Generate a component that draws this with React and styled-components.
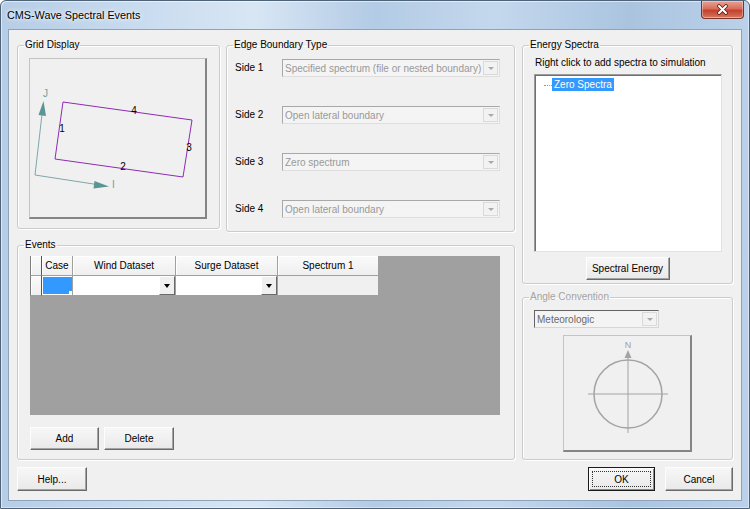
import React from 'react';
import styled, { createGlobalStyle } from 'styled-components';

const GlobalStyle = createGlobalStyle`
  html, body { margin:0; padding:0; width:750px; height:509px; overflow:hidden; background:#fff; }
  body { font-family:"Liberation Sans", Arial, sans-serif; font-size:10px; color:#000; }
  #root { width:750px; height:509px; }
`;

const Window = styled.div`
  width:750px;
  height:509px;
  box-sizing:border-box;
  border:1px solid #4e6378;
  border-radius:6px 6px 0 0;
  background:linear-gradient(90deg, #b6cde6 0%, #c8dbef 18%, #d8e6f4 34%, #b3cbe5 50%, #c4d8ed 66%, #aac4e0 84%, #bbd1e9 100%);
  box-shadow:inset 1px 1px 0 rgba(255,255,255,0.55), inset -1px -1px 0 rgba(255,255,255,0.4);
  display:flex;
  flex-direction:column;
`;

const TitleBar = styled.div`
  height:28px;
  flex:none;
  display:flex;
  align-items:flex-start;
  padding-left:6px;
`;

const Title = styled.div`
  margin-top:8px;
  font-size:10.8px;
  line-height:12px;
  text-shadow:0 0 6px rgba(255,255,255,0.95), 0 0 3px rgba(255,255,255,0.9);
`;

const CloseButton = styled.div`
  margin-left:auto;
  margin-right:5px;
  width:43px;
  height:18px;
  box-sizing:border-box;
  border:1px solid #7a3329;
  border-top:none;
  border-radius:0 0 4px 4px;
  background:linear-gradient(#eaa393 0%, #d76d5d 45%, #c4402c 55%, #cf6a52 90%, #dc8b76 100%);
  box-shadow:inset 0 0 0 1px rgba(255,255,255,0.35);
  display:flex;
  align-items:center;
  justify-content:center;
`;

const Client = styled.div`
  flex:1;
  margin:0 7px 7px;
  border:1px solid #8ea3ba;
  background:#f0f0f0;
  padding:9px 8px 0 8px;
  display:flex;
  flex-direction:column;
  gap:7px;
`;

const MainArea = styled.div`
  height:421px;
  display:flex;
  gap:7px;
`;

const Column = styled.div`
  width:${p => p.$w}px;
  display:flex;
  flex-direction:column;
  gap:7px;
`;

const TopRow = styled.div`
  display:flex;
  gap:6px;
  align-items:flex-start;
`;

const Group = styled.fieldset`
  margin:0;
  padding:0;
  min-width:0;
  box-sizing:border-box;
  width:${p => p.$w}px;
  height:${p => p.$h}px;
  border:1px solid #cbcbcb;
  border-radius:3px;
  box-shadow:inset 1px 1px 0 #fff, 1px 1px 0 #fff;
`;

const Legend = styled.legend`
  margin-left:6px;
  padding:0 1px;
  line-height:12px;
  color:${p => (p.$disabled ? '#a3a3a3' : '#000')};
`;

const DrawPanel = styled.div`
  box-sizing:border-box;
  width:${p => p.$w}px;
  height:${p => p.$h}px;
  margin:${p => p.$m};
  border-style:solid;
  border-width:1px 2px 2px 1px;
  border-color:#c4c4c4 #858585 #858585 #c4c4c4;
  background:#f0f0f0;
  svg { display:block; width:100%; height:100%; }
`;

const SideGrid = styled.div`
  display:grid;
  grid-template-columns:47px 218px;
  grid-auto-rows:18px;
  row-gap:29px;
  align-items:center;
  padding:8px 0 0 8px;
`;

const SideLabel = styled.div`
  line-height:12px;
`;

const Combo = styled.div`
  box-sizing:border-box;
  width:${p => p.$w || 218}px;
  height:18px;
  margin:${p => p.$m || '0'};
  display:flex;
  align-items:center;
  border:1px solid;
  border-color:${p => (p.$dark ? '#646464 #d6d6d6 #d6d6d6 #646464' : '#a8a8a8 #dedede #dedede #a8a8a8')};
  background:#f4f4f4;
  color:${p => (p.$dark ? '#6a6a6a' : '#999')};
  padding:0 1px 0 2px;
  white-space:nowrap;
`;

const ComboText = styled.span`
  flex:1;
  overflow:hidden;
`;

const ComboArrow = styled.span`
  width:15px;
  height:14px;
  box-sizing:border-box;
  border:1px solid #dadada;
  background:#f2f2f2;
  display:flex;
  align-items:center;
  justify-content:center;
  &::after {
    content:'';
    border-left:3px solid transparent;
    border-right:3px solid transparent;
    border-top:3px solid #a8a8a8;
  }
`;

const Hint = styled.div`
  margin:6px 0 0 12px;
  line-height:12px;
`;

const Tree = styled.div`
  box-sizing:border-box;
  width:188px;
  height:178px;
  margin:5px 0 0 11px;
  border:1px solid;
  border-color:#9c9c9c #e2e2e2 #e2e2e2 #9c9c9c;
  box-shadow:inset 1px 1px 0 #6f6f6f;
  background:#fff;
  padding:3px 0 0 9px;
`;

const TreeItem = styled.div`
  display:flex;
  align-items:center;
  &::before {
    content:'';
    width:8px;
    border-top:1px dotted #9a9a9a;
    margin-top:1px;
  }
`;

const Selected = styled.span`
  background:#3399ff;
  color:#fff;
  padding:0 2px;
  line-height:13px;
`;

const Button = styled.div`
  box-sizing:border-box;
  width:${p => p.$w}px;
  height:${p => p.$h || 23}px;
  margin:${p => p.$m || '0'};
  display:flex;
  align-items:center;
  justify-content:center;
  background:linear-gradient(#f7f7f7, #e9e9e9);
  border:1px solid;
  border-color:${p => (p.$default ? '#1a1a1a' : '#fdfdfd #6b6b6b #6b6b6b #fdfdfd')};
  box-shadow:${p => (p.$default
    ? 'inset 1px 1px 0 #fff, inset -1px -1px 0 #888'
    : 'inset -1px -1px 0 #a3a3a3')};
  position:relative;
`;

const FocusRing = styled.span`
  position:absolute;
  inset:3px;
  border:1px dotted #333;
`;

const ButtonCenter = styled.div`
  display:flex;
  justify-content:center;
  margin-top:5px;
`;

const ButtonRow = styled.div`
  display:flex;
  gap:5px;
  margin:12px 0 0 12px;
`;

const DataGrid = styled.div`
  box-sizing:border-box;
  width:470px;
  height:159px;
  margin:5px 0 0 12px;
  background:#a0a0a0;
  display:grid;
  grid-template-columns:12px 31px 103px 102px 101px;
  grid-template-rows:20px 20px;
  align-content:start;
  justify-content:start;
`;

const HeadCell = styled.div`
  box-sizing:border-box;
  background:linear-gradient(#fafafa, #efefef);
  border-right:1px solid ${p => (p.$corner ? '#555' : '#a0a0a0')};
  border-bottom:1px solid #a0a0a0;
  border-left:${p => (p.$first ? '1px solid #7d7d7d' : 'none')};
  box-shadow:inset 1px 1px 0 #fff;
  display:flex;
  align-items:center;
  justify-content:center;
`;

const Cell = styled.div`
  box-sizing:border-box;
  background:${p => p.$bg || '#fff'};
  border-right:1px solid #a0a0a0;
  border-bottom:1px solid #a0a0a0;
  display:flex;
  justify-content:flex-end;
  align-items:stretch;
  padding:${p => p.$pad || '0'};
`;

const CaseFill = styled.div`
  flex:1;
  background:#3399ff;
  position:relative;
  &::after {
    content:'';
    position:absolute;
    right:0;
    bottom:0;
    width:3px;
    height:3px;
    background:#fff;
  }
`;

const CellDrop = styled.div`
  width:16px;
  box-sizing:border-box;
  background:#f0f0f0;
  border:1px solid;
  border-color:#fff #6b6b6b #6b6b6b #fff;
  display:flex;
  align-items:center;
  justify-content:center;
  &::after {
    content:'';
    border-left:3px solid transparent;
    border-right:3px solid transparent;
    border-top:4px solid #000;
  }
`;

const BottomRow = styled.div`
  display:flex;
  gap:10px;
  height:24px;
`;

const Spacer = styled.div`
  flex:1;
`;

const GridDrawing = () => (
  <svg viewBox="30 59 175 158">
    <g stroke="#7fa7a7" strokeWidth="1" fill="none">
      <line x1="35" y1="175" x2="42.5" y2="110" />
      <line x1="35" y1="175" x2="100" y2="185" />
    </g>
    <polygon points="43.5,101 38.5,115 46,116" fill="#5a9494" />
    <polygon points="109,186.5 94.5,181 93.5,188.5" fill="#5a9494" />
    <text x="43" y="97" fontSize="10" fill="#6f9c9c" fontFamily="Liberation Sans, Arial, sans-serif">J</text>
    <text x="112" y="188" fontSize="10" fill="#6f9c9c" fontFamily="Liberation Sans, Arial, sans-serif">I</text>
    <polygon points="63,102 192,120 183,177 55,159" fill="none" stroke="#8e2bb3" strokeWidth="1" />
    <g fontSize="10" fill="#000" fontFamily="Liberation Sans, Arial, sans-serif" textAnchor="middle">
      <text x="134" y="114">4</text>
      <text x="62" y="132">1</text>
      <text x="189" y="151">3</text>
      <text x="123" y="170">2</text>
    </g>
  </svg>
);

const Compass = () => (
  <svg viewBox="564 336 126 114">
    <g stroke="#a3a3a3" fill="none">
      <circle cx="628" cy="394" r="34" strokeWidth="1.5" />
      <line x1="588" y1="394" x2="668" y2="394" strokeWidth="1" />
      <line x1="628" y1="356" x2="628" y2="433" strokeWidth="1" />
    </g>
    <polygon points="628,350 624.5,358 631.5,358" fill="#a3a3a3" />
    <text x="628" y="348" fontSize="9" fill="#a3a3a3" textAnchor="middle" fontFamily="Liberation Sans, Arial, sans-serif">N</text>
  </svg>
);

const sides = [
  ['Side 1', 'Specified spectrum (file or nested boundary)'],
  ['Side 2', 'Open lateral boundary'],
  ['Side 3', 'Zero spectrum'],
  ['Side 4', 'Open lateral boundary'],
];

export default function App() {
  return (
    <>
      <GlobalStyle />
      <Window>
        <TitleBar>
          <Title>CMS-Wave Spectral Events</Title>
          <CloseButton>
            <svg width="13" height="11" viewBox="0 0 13 11">
              <path d="M3 2 L10 9 M10 2 L3 9" stroke="#5a1e16" strokeWidth="3.6" strokeLinecap="round" />
              <path d="M3 2 L10 9 M10 2 L3 9" stroke="#fff" strokeWidth="2" strokeLinecap="round" />
            </svg>
          </CloseButton>
        </TitleBar>
        <Client>
          <MainArea>
            <Column $w={498}>
              <TopRow>
                <Group $w={203} $h={190}>
                  <Legend>Grid Display</Legend>
                  <DrawPanel $w={178} $h={161} $m="7px 0 0 11px">
                    <GridDrawing />
                  </DrawPanel>
                </Group>
                <Group $w={289} $h={193}>
                  <Legend>Edge Boundary Type</Legend>
                  <SideGrid>
                    {sides.map(([label, value]) => (
                      <React.Fragment key={label}>
                        <SideLabel>{label}</SideLabel>
                        <Combo>
                          <ComboText>{value}</ComboText>
                          <ComboArrow />
                        </Combo>
                      </React.Fragment>
                    ))}
                  </SideGrid>
                </Group>
              </TopRow>
              <Group $w={498} $h={221}>
                <Legend>Events</Legend>
                <DataGrid>
                  <HeadCell $first $corner />
                  <HeadCell>Case</HeadCell>
                  <HeadCell>Wind Dataset</HeadCell>
                  <HeadCell>Surge Dataset</HeadCell>
                  <HeadCell>Spectrum 1</HeadCell>
                  <HeadCell $first $corner />
                  <Cell $pad="1px 0 1px 1px"><CaseFill /></Cell>
                  <Cell><CellDrop /></Cell>
                  <Cell><CellDrop /></Cell>
                  <Cell $bg="#f0f0f0" />
                </DataGrid>
                <ButtonRow>
                  <Button $w={69}>Add</Button>
                  <Button $w={70}>Delete</Button>
                </ButtonRow>
              </Group>
            </Column>
            <Column $w={211}>
              <Group $w={211} $h={245}>
                <Legend>Energy Spectra</Legend>
                <Hint>Right click to add spectra to simulation</Hint>
                <Tree>
                  <TreeItem><Selected>Zero Spectra</Selected></TreeItem>
                </Tree>
                <ButtonCenter>
                  <Button $w={84}>Spectral Energy</Button>
                </ButtonCenter>
              </Group>
              <Group $w={211} $h={169}>
                <Legend $disabled>Angle Convention</Legend>
                <Combo $dark $w={125} $m="7px 0 0 11px">
                  <ComboText>Meteorologic</ComboText>
                  <ComboArrow />
                </Combo>
                <DrawPanel $w={129} $h={117} $m="7px auto 0">
                  <Compass />
                </DrawPanel>
              </Group>
            </Column>
          </MainArea>
          <BottomRow>
            <Button $w={70} $h={24}>Help...</Button>
            <Spacer />
            <Button $w={67} $h={24} $default>OK<FocusRing /></Button>
            <Button $w={68} $h={24}>Cancel</Button>
          </BottomRow>
        </Client>
      </Window>
    </>
  );
}
